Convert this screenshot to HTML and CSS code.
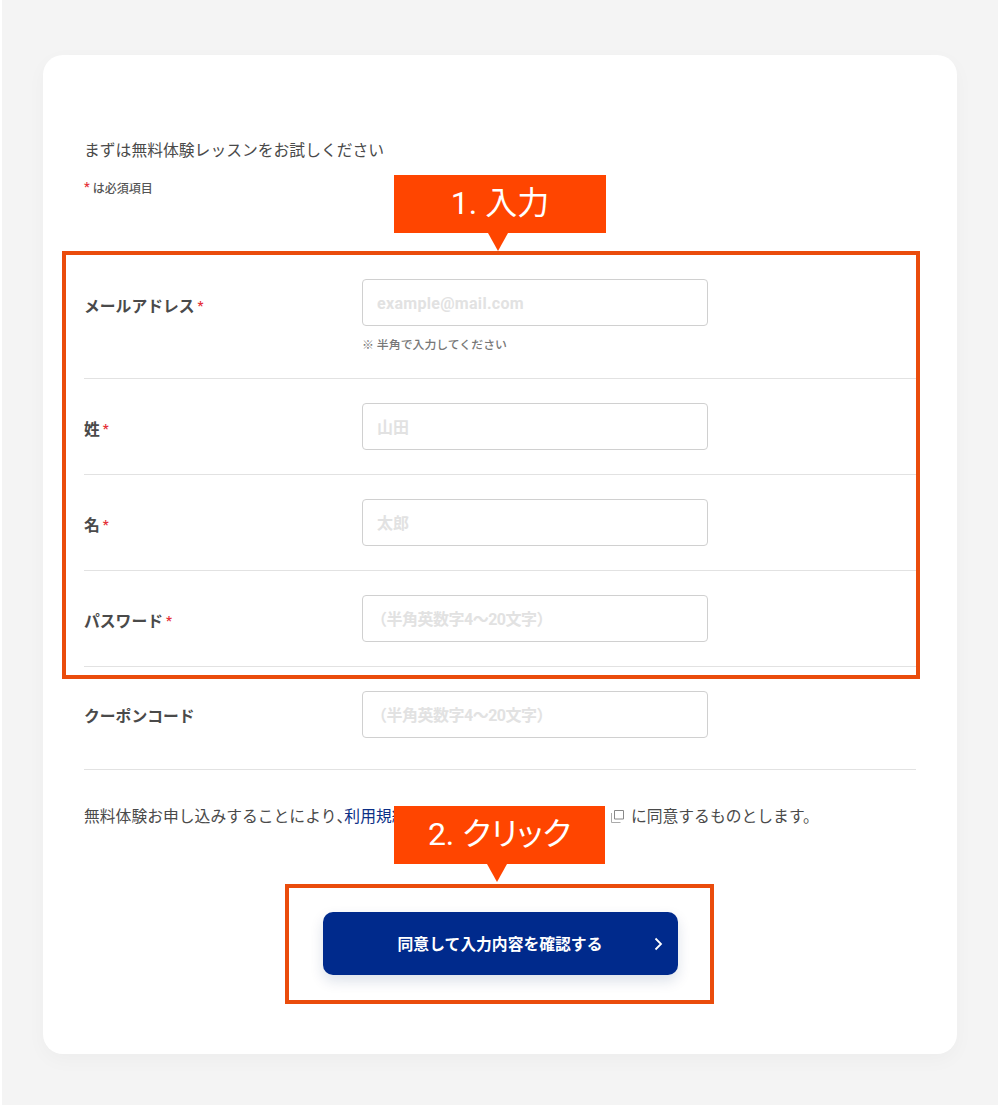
FILE: index.html
```html
<!DOCTYPE html>
<html lang="ja">
<head>
    <meta charset="UTF-8">
    <meta name="viewport" content="width=device-width, initial-scale=1.0">
    <title>無料体験レッスン</title>
    <link rel="stylesheet" href="styles.css">
</head>
<body>
    <div class="page">
        <div class="card">
            <p class="intro">まずは無料体験レッスンをお試しください</p>
            <p class="required-note"><span class="mark">*</span> は必須項目</p>

            <!-- 入力フォーム -->
            <form class="form">
                <div class="row row-first">
                    <label class="row-label">メールアドレス<span class="mark">*</span></label>
                    <div class="row-field">
                        <input type="text" class="field field-mail" placeholder="example@mail.com">
                        <p class="hint">※ 半角で入力してください</p>
                    </div>
                </div>
                <div class="row">
                    <label class="row-label">姓<span class="mark">*</span></label>
                    <div class="row-field"><input type="text" class="field" placeholder="山田"></div>
                </div>
                <div class="row">
                    <label class="row-label">名<span class="mark">*</span></label>
                    <div class="row-field"><input type="text" class="field" placeholder="太郎"></div>
                </div>
                <div class="row">
                    <label class="row-label">パスワード<span class="mark">*</span></label>
                    <div class="row-field"><input type="text" class="field field-paren" placeholder="（半角英数字4〜20文字）"></div>
                </div>
                <div class="row row-last">
                    <label class="row-label">クーポンコード</label>
                    <div class="row-field"><input type="text" class="field field-paren" placeholder="（半角英数字4〜20文字）"></div>
                </div>
            </form>

            <p class="agreement">無料体験お申し込みすることにより<span class="comma">、</span><a href="#" class="agreement-link">利用規約</a><svg class="external-icon" viewBox="0 0 13 13" width="13" height="13" aria-hidden="true"><path d="M3.5 0.5h9v8.5h-9z" fill="none" stroke="#888"/><path d="M0.5 3v9.5h9" fill="none" stroke="#aaa"/></svg>と<a href="#" class="agreement-link">プライバシーポリシー</a><svg class="external-icon" viewBox="0 0 13 13" width="13" height="13" aria-hidden="true"><path d="M3.5 0.5h9v8.5h-9z" fill="none" stroke="#888"/><path d="M0.5 3v9.5h9" fill="none" stroke="#aaa"/></svg> に同意するものとします。</p>

            <div class="submit-wrap">
                <button type="button" class="submit">
                    同意して入力内容を確認する
                    <svg class="submit-arrow" viewBox="0 0 9 14" width="9" height="14" aria-hidden="true"><path d="M1.5 1.5L7 7l-5.500 5.500" fill="none" stroke="#fff" stroke-width="1.800"/></svg>
                </button>
            </div>
        </div>
    </div>

    <!-- 説明用の注釈 -->
    <div class="note-box note-box-form"></div>
    <div class="note-label note-label-form">1. 入力</div>
    <div class="note-box note-box-submit"></div>
    <div class="note-label note-label-submit">2. クリック</div>
</body>
</html>
```

FILE: styles.css
```css
body {
    margin: 0;
    background-color: #fff;
    color: #4a4a4a;
    font-family: Roboto, "Noto Sans CJK JP", sans-serif;
    position: relative;
}

p {
    margin: 0;
}

.page {
    margin: 0 0 2px 2px;
    height: 1105px;
    padding-top: 55px;
    box-sizing: border-box;
    background-color: #f4f4f4;
}

.card {
    margin: 0 41px;
    height: 999px;
    padding: 85px 41px 0;
    box-sizing: border-box;
    background-color: #fff;
    border-radius: 20px;
    box-shadow: 0 6px 20px rgba(0, 0, 0, 0.03);
}

.intro {
    font-size: 15.800px;
    line-height: 22px;
}

.required-note {
    margin-top: 14px;
    font-size: 12px;
    font-weight: 500;
    line-height: 22px;
    color: #555;
}

.mark {
    color: #e5333a;
    margin-left: 3px;
    font-size: 13px;
    vertical-align: 2px;
}

.required-note .mark {
    margin-left: 0;
}

/* フォーム */
.form {
    margin-top: 55px;
}

.row {
    display: flex;
    padding: 24px 0;
    border-bottom: 1px solid #e2e2e2;
}

.row-last {
    padding-bottom: 31px;
}

.row-label {
    width: 278px;
    flex-shrink: 0;
    padding-top: 15px;
    font-size: 15.800px;
    font-weight: 700;
    line-height: 22px;
}

.row-first .row-label {
    padding-top: 16px;
}

.field {
    display: block;
    width: 346px;
    height: 47px;
    padding: 2px 14px 0;
    box-sizing: border-box;
    background-color: #fff;
    border: 1px solid #d0d0d0;
    border-radius: 4px;
    font-family: inherit;
    font-size: 16px;
    font-weight: 700;
}

.field-mail {
    letter-spacing: 0.3px;
}

.field-paren {
    padding-left: 8px;
    letter-spacing: -0.5px;
}

.field::placeholder {
    color: #e2e2e2;
    opacity: 1;
}

.hint {
    margin-top: 11px;
    font-size: 11.900px;
    font-weight: 500;
    line-height: 17px;
    color: #777;
}

.agreement {
    margin-top: 36px;
    font-size: 15.800px;
    line-height: 22px;
}

.comma {
    font-feature-settings: "halt";
}

.agreement-link {
    color: #0c2f86;
    text-decoration: none;
}

.external-icon {
    margin: 0 3px 0 7px;
    vertical-align: -1px;
}

/* 送信ボタン */
.submit-wrap {
    display: flex;
    justify-content: center;
    margin-top: 84px;
}

.submit {
    position: relative;
    width: 355px;
    height: 63px;
    background-color: #002a8c;
    border: none;
    border-radius: 10px;
    box-shadow: 0 6px 14px rgba(0, 42, 100, 0.14);
    color: #fff;
    font-family: inherit;
    font-size: 15.800px;
    font-weight: 700;
}

.submit-arrow {
    position: absolute;
    top: 25px;
    right: 15px;
}

/* 注釈 */
.note-box {
    position: absolute;
    box-sizing: border-box;
    border: 4px solid #ea4c0c;
}

.note-box-form {
    left: 62px;
    top: 251px;
    width: 858px;
    height: 428px;
}

.note-box-submit {
    left: 285px;
    top: 884px;
    width: 429px;
    height: 120px;
}

.note-label {
    position: absolute;
    left: 394px;
    width: 212px;
    height: 58px;
    background-color: #ff4500;
    color: #fff;
    font-feature-settings: "palt";
    font-size: 32px;
    line-height: 56px;
    text-align: center;
}

.note-label::after {
    content: "";
    position: absolute;
    left: 94px;
    top: 58px;
    border-top: 18px solid #ff4500;
    border-left: 10px solid transparent;
    border-right: 10px solid transparent;
}

.note-label-form {
    top: 175px;
}

.note-label-submit {
    top: 806px;
    width: 211px;
}

.note-label-submit::after {
    left: 93px;
}
```
